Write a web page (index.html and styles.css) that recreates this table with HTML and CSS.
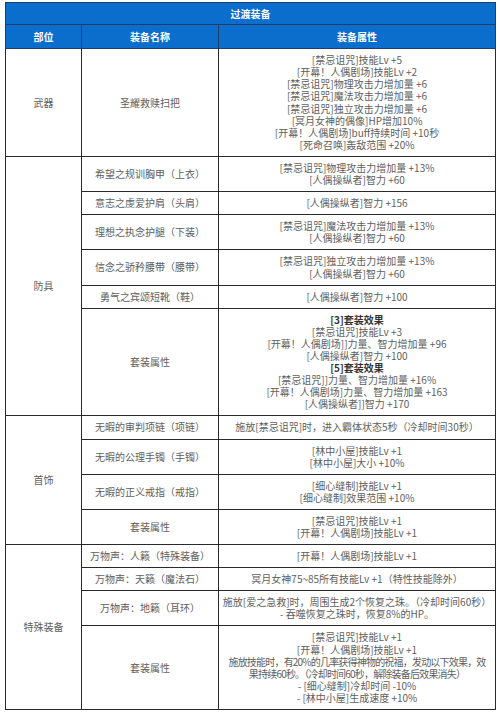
FILE: index.html
```html
<!DOCTYPE html>
<html lang="zh">
<head>
<meta charset="utf-8">
<title>过渡装备</title>
<link rel="stylesheet" href="styles.css">
</head>
<body>
<table class="equip">
  <colgroup>
    <col class="c-part">
    <col class="c-name">
    <col class="c-attr">
  </colgroup>
  <thead>
    <tr class="title-row"><th colspan="3">过渡装备</th></tr>
    <tr class="head-row"><th>部位</th><th>装备名称</th><th>装备属性</th></tr>
  </thead>
  <tbody>
    <tr>
      <td>武器</td>
      <td>圣耀救赎扫把</td>
      <td>[禁忌诅咒]技能Lv +5<br>[开幕！人偶剧场]技能Lv +2<br>[禁忌诅咒]物理攻击力增加量 +6<br>[禁忌诅咒]魔法攻击力增加量 +6<br>[禁忌诅咒]独立攻击力增加量 +6<br>[冥月女神的偶像]HP增加10%<br>[开幕！人偶剧场]buff持续时间 +10秒<br>[死命召唤]轰敌范围 +20%</td>
    </tr>
    <tr>
      <td rowspan="6">防具</td>
      <td>希望之规训胸甲（上衣）</td>
      <td>[禁忌诅咒]物理攻击力增加量 +13%<br>[人偶操纵者]智力 +60</td>
    </tr>
    <tr>
      <td>意志之虔爱护肩（头肩）</td>
      <td>[人偶操纵者]智力 +156</td>
    </tr>
    <tr>
      <td>理想之执念护腿（下装）</td>
      <td>[禁忌诅咒]魔法攻击力增加量 +13%<br>[人偶操纵者]智力 +60</td>
    </tr>
    <tr>
      <td>信念之骄矜腰带（腰带）</td>
      <td>[禁忌诅咒]独立攻击力增加量 +13%<br>[人偶操纵者]智力 +60</td>
    </tr>
    <tr>
      <td>勇气之宾颂短靴（鞋）</td>
      <td>[人偶操纵者]智力 +100</td>
    </tr>
    <tr>
      <td>套装属性</td>
      <td><b class="set">[3]套装效果</b><br>[禁忌诅咒]技能Lv +3<br>[开幕！人偶剧场]]力量、智力增加量 +96<br>[人偶操纵者]智力 +100<br><b class="set">[5]套装效果</b><br>[禁忌诅咒]]力量、智力增加量 +16%<br>[开幕！人偶剧场]力量、智力增加量 +163<br>[人偶操纵者]]智力 +170</td>
    </tr>
    <tr>
      <td rowspan="4">首饰</td>
      <td>无暇的审判项链（项链）</td>
      <td>施放[禁忌诅咒]时，进入霸体状态5秒（冷却时间30秒）</td>
    </tr>
    <tr>
      <td>无暇的公理手镯（手镯）</td>
      <td>[林中小屋]技能Lv +1<br>[林中小屋]大小 +10%</td>
    </tr>
    <tr>
      <td>无暇的正义戒指（戒指）</td>
      <td>[细心缝制]技能Lv +1<br>[细心缝制]效果范围 +10%</td>
    </tr>
    <tr>
      <td>套装属性</td>
      <td>[禁忌诅咒]技能Lv +1<br>[开幕！人偶剧场]技能Lv +1</td>
    </tr>
    <tr>
      <td rowspan="4">特殊装备</td>
      <td>万物声：人籁（特殊装备）</td>
      <td>[开幕！人偶剧场]技能Lv +1</td>
    </tr>
    <tr>
      <td>万物声：天籁（魔法石）</td>
      <td>冥月女神75~85所有技能Lv +1（特性技能除外）</td>
    </tr>
    <tr>
      <td>万物声：地籁（耳环）</td>
      <td>施放[爱之急救]时，周围生成2个恢复之珠。（冷却时间60秒）<br>- 吞噬恢复之珠时，恢复8%的HP。</td>
    </tr>
    <tr>
      <td>套装属性</td>
      <td>[禁忌诅咒]技能Lv +1<br>[开幕！人偶剧场]技能Lv +1<br><span class="tight">施放技能时，有20%的几率获得神物的祝福，发动以下效果，效</span><br><span class="tight">果持续60秒。（冷却时间60秒，解除装备后效果消失）</span><br>- [细心缝制]冷却时间 -10%<br>- [林中小屋]生成速度 +10%</td>
    </tr>
  </tbody>
</table>
</body>
</html>
```

FILE: styles.css
```css
html, body {
  margin: 0;
  padding: 0;
  background: #ffffff;
}

body {
  padding: 2px 0 0 5px;
  font-family: "Noto Sans CJK SC", "Noto Sans", sans-serif;
}

.equip {
  width: 491px;
  border-collapse: collapse;
  table-layout: fixed;
  font-size: 10px;
  line-height: 12.1px;
  color: #606060;
  border: 1px solid #2a2a2a;
}

.c-part { width: 76px; }
.c-name { width: 137px; }
.c-attr { width: auto; }

.equip th {
  background: #0b6dcc;
  color: #ffffff;
  font-weight: bold;
  text-align: center;
  border: 1px solid #1e3d68;
}

.title-row th {
  padding: 5px 0 4px;
}

.head-row th {
  padding: 6px 0 5px;
}

.equip td {
  border: 1px solid #2a2a2a;
  text-align: center;
  vertical-align: middle;
  padding: 5px 2px;
  white-space: nowrap;
}

.tight {
  letter-spacing: -0.8px;
}

.set {
  color: #333333;
  font-weight: bold;
}
```
